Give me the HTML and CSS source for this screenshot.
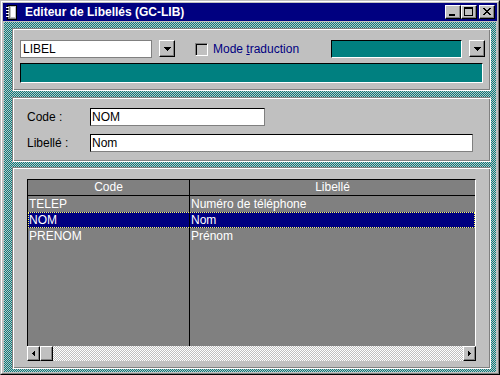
FILE: index.html
```html
<!DOCTYPE html>
<html lang="fr">
<head>
    <meta charset="UTF-8">
    <title>Editeur de Libellés (GC-LIB)</title>
    <link rel="stylesheet" href="styles.css">
</head>
<body>
    <div class="window">
        <div class="frame">
            <div class="titlebar">
                <svg class="app-icon" width="12" height="15" viewBox="0 0 12 15" shape-rendering="crispEdges">
                    <rect x="1" y="0" width="10" height="15" fill="#000"/>
                    <rect x="2" y="1" width="8" height="13" fill="#808080"/>
                    <rect x="4" y="1" width="6" height="12" fill="#c0c0c0"/>
                    <rect x="5" y="2" width="4" height="10" fill="#fff"/>
                    <rect x="0" y="2" width="3" height="1" fill="#fff"/>
                    <rect x="0" y="5" width="3" height="1" fill="#fff"/>
                    <rect x="0" y="8" width="3" height="1" fill="#fff"/>
                    <rect x="0" y="11" width="3" height="1" fill="#fff"/>
                </svg>
                <span class="title">Editeur de Libellés (GC-LIB)</span>
                <div class="title-buttons">
                    <div class="tb-btn">
                        <svg width="14" height="12" shape-rendering="crispEdges"><rect x="3" y="8" width="6" height="2" fill="#000"/></svg>
                    </div>
                    <div class="tb-btn">
                        <svg width="14" height="12" shape-rendering="crispEdges">
                            <rect x="2" y="1" width="9" height="2" fill="#000"/>
                            <rect x="2" y="3" width="1" height="7" fill="#000"/>
                            <rect x="10" y="3" width="1" height="7" fill="#000"/>
                            <rect x="2" y="9" width="9" height="1" fill="#000"/>
                        </svg>
                    </div>
                    <div class="tb-btn tb-close">
                        <svg width="14" height="12" shape-rendering="crispEdges" fill="#000">
                            <rect x="3" y="2" width="2" height="1"/><rect x="9" y="2" width="2" height="1"/>
                            <rect x="4" y="3" width="2" height="1"/><rect x="8" y="3" width="2" height="1"/>
                            <rect x="5" y="4" width="4" height="1"/>
                            <rect x="6" y="5" width="2" height="1"/>
                            <rect x="5" y="6" width="4" height="1"/>
                            <rect x="4" y="7" width="2" height="1"/><rect x="8" y="7" width="2" height="1"/>
                            <rect x="3" y="8" width="2" height="1"/><rect x="9" y="8" width="2" height="1"/>
                        </svg>
                    </div>
                </div>
            </div>

            <div class="client">
                <div class="panel panel-top">
                    <div class="combo-row">
                        <div class="field field-libel">LIBEL</div>
                        <div class="drop-btn">
                            <svg width="7" height="4" shape-rendering="crispEdges" fill="#000">
                                <rect x="0" y="0" width="7" height="1"/><rect x="1" y="1" width="5" height="1"/>
                                <rect x="2" y="2" width="3" height="1"/><rect x="3" y="3" width="1" height="1"/>
                            </svg>
                        </div>
                        <div class="check"></div>
                        <span class="check-label">Mode <u>t</u>raduction</span>
                        <div class="field field-teal field-lang"></div>
                        <div class="drop-btn">
                            <svg width="7" height="4" shape-rendering="crispEdges" fill="#000">
                                <rect x="0" y="0" width="7" height="1"/><rect x="1" y="1" width="5" height="1"/>
                                <rect x="2" y="2" width="3" height="1"/><rect x="3" y="3" width="1" height="1"/>
                            </svg>
                        </div>
                    </div>
                    <div class="field field-teal teal-bar"></div>
                </div>

                <div class="panel panel-edit">
                    <div class="form-row">
                        <span class="form-label">Code :</span>
                        <div class="field field-edit field-code">NOM</div>
                    </div>
                    <div class="form-row">
                        <span class="form-label">Libellé :</span>
                        <div class="field field-edit field-name">Nom</div>
                    </div>
                </div>

                <div class="panel panel-grid">
                    <div class="grid">
                        <div class="table">
                            <div class="grid-head">
                                <div class="cell cell-code">Code</div>
                                <div class="cell">Libellé</div>
                            </div>
                            <div class="grid-row">
                                <div class="cell cell-code">TELEP</div>
                                <div class="cell">Numéro de téléphone</div>
                            </div>
                            <div class="grid-row selected">
                                <div class="cell cell-code">NOM</div>
                                <div class="cell">Nom</div>
                            </div>
                            <div class="grid-row">
                                <div class="cell cell-code">PRENOM</div>
                                <div class="cell">Prénom</div>
                            </div>
                            <div class="grid-row grid-fill">
                                <div class="cell cell-code"></div>
                                <div class="cell"></div>
                            </div>
                        </div>
                        <div class="hscroll">
                            <div class="sb-btn">
                                <svg width="3" height="5" shape-rendering="crispEdges" fill="#000">
                                    <rect x="2" y="0" width="1" height="5"/><rect x="1" y="1" width="1" height="3"/><rect x="0" y="2" width="1" height="1"/>
                                </svg>
                            </div>
                            <div class="sb-btn"></div>
                            <div class="sb-btn sb-right">
                                <svg width="3" height="5" shape-rendering="crispEdges" fill="#000">
                                    <rect x="0" y="0" width="1" height="5"/><rect x="1" y="1" width="1" height="3"/><rect x="2" y="2" width="1" height="1"/>
                                </svg>
                            </div>
                        </div>
                    </div>
                </div>
            </div>
        </div>
    </div>
</body>
</html>
```

FILE: styles.css
```css
body {
    margin: 0;
    padding: 0;
    font-family: "Liberation Sans", Arial, sans-serif;
    font-size: 12px;
    color: #000;
    background-color: #c0c0c0;
}
.window {
    width: 500px;
    height: 375px;
    box-sizing: border-box;
    border: 1px solid;
    border-color: #c0c0c0 #000 #000 #c0c0c0;
    background-color: #c0c0c0;
}
.frame {
    height: 100%;
    box-sizing: border-box;
    border: 1px solid;
    border-color: #fff #808080 #808080 #fff;
    padding: 1px;
    display: flex;
    flex-direction: column;
}
.titlebar {
    height: 18px;
    flex-shrink: 0;
    background-color: #000080;
    display: flex;
    align-items: center;
}
.app-icon {
    margin-left: 3px;
}
.title {
    margin-left: 7px;
    color: #fff;
    font-weight: bold;
    font-size: 12px;
    line-height: 18px;
}
.title-buttons {
    margin-left: auto;
    margin-right: 2px;
    display: flex;
}
.tb-btn {
    width: 16px;
    height: 14px;
    box-sizing: border-box;
    background-color: #c0c0c0;
    border: 1px solid;
    border-color: #fff #000 #000 #fff;
    box-shadow: inset -1px -1px #808080;
}
.tb-btn svg {
    display: block;
}
.tb-close {
    margin-left: 2px;
}
.client {
    flex: 1;
    margin: 1px 1px 0 1px;
    padding: 6px 5px 3px 8px;
    display: flex;
    flex-direction: column;
    background: repeating-conic-gradient(#008080 0 25%, #c0c0c0 0 50%) 0 0 / 2px 2px;
}
.panel {
    box-sizing: border-box;
    background-color: #c0c0c0;
    border: 1px solid;
    border-color: #808080 #fff #fff #808080;
    box-shadow: inset 1px 1px #fff, inset -1px -1px #808080;
}
.panel-top {
    height: 63px;
    padding: 11px 0 0 7px;
}
.panel-edit {
    height: 65px;
    margin-top: 6px;
    padding: 10px 0 0 14px;
}
.panel-grid {
    flex: 1;
    margin-top: 5px;
    padding: 11px 0 0 14px;
}
.combo-row {
    display: flex;
    align-items: flex-start;
    height: 18px;
}
.field {
    box-sizing: border-box;
    height: 18px;
    line-height: 16px;
    padding-left: 1px;
    background-color: #fff;
    border: 1px solid #808080;
    white-space: nowrap;
}
.field-libel {
    width: 132px;
    padding-left: 2px;
}
.field-teal {
    background-color: #008080;
    border-color: #000 #fff #fff #000;
}
.field-lang {
    width: 131px;
}
.teal-bar {
    width: 463px;
    height: 20px;
    margin-top: 5px;
}
.drop-btn {
    width: 16px;
    height: 17px;
    margin-left: 7px;
    box-sizing: border-box;
    background-color: #c0c0c0;
    border: 1px solid;
    border-color: #fff #000 #000 #fff;
    box-shadow: inset -1px -1px #808080;
    display: flex;
    align-items: center;
    justify-content: center;
}
.check {
    width: 13px;
    height: 13px;
    margin: 3px 0 0 20px;
    box-sizing: border-box;
    border: 1px solid;
    border-color: #808080 #fff #fff #808080;
    box-shadow: inset 1px 1px #000;
    background-color: #c0c0c0;
}
.check-label {
    width: 118px;
    margin-left: 5px;
    color: #000080;
    line-height: 18px;
    white-space: nowrap;
}
.form-row {
    display: flex;
    align-items: center;
    height: 18px;
    margin-bottom: 8px;
}
.form-label {
    width: 63px;
    flex-shrink: 0;
}
.field-edit {
    border-color: #000 #808080 #808080 #000;
}
.field-code {
    width: 175px;
}
.field-name {
    width: 383px;
}
.grid {
    width: 449px;
    height: 182px;
    display: flex;
    flex-direction: column;
}
.table {
    flex: 1;
    display: flex;
    flex-direction: column;
    background-color: #808080;
    border-top: 1px solid #000;
    border-left: 1px solid #000;
    border-right: 1px solid #fff;
    color: #fff;
}
.grid-head,
.grid-row {
    display: grid;
    grid-template-columns: 162px 1fr;
    box-sizing: border-box;
    height: 16px;
    line-height: 16px;
    white-space: nowrap;
}
.grid-head {
    border-bottom: 1px solid #000;
    line-height: 15px;
    text-align: center;
}
.cell {
    padding-left: 1px;
    overflow: hidden;
}
.grid-head .cell {
    padding-left: 0;
}
.cell-code {
    border-right: 1px solid #000;
}
.selected {
    background-color: #000080;
    outline: 1px dotted #ffff60;
    outline-offset: -1px;
}
.grid-fill {
    flex: 1;
}
.hscroll {
    height: 15px;
    display: flex;
    background: repeating-conic-gradient(#fff 0 25%, #c0c0c0 0 50%) 0 0 / 2px 2px;
}
.sb-btn {
    width: 13px;
    height: 15px;
    box-sizing: border-box;
    background-color: #c0c0c0;
    border: 1px solid;
    border-color: #fff #000 #000 #fff;
    box-shadow: inset -1px -1px #808080;
    display: flex;
    align-items: center;
    justify-content: center;
}
.sb-right {
    margin-left: auto;
}
```
